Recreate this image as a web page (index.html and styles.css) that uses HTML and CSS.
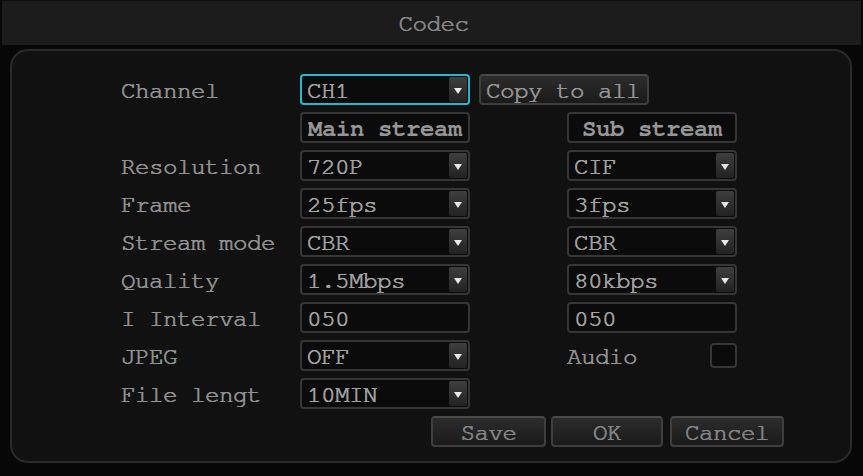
FILE: index.html
```html
<!DOCTYPE html>
<html>
<head>
<meta charset="utf-8">
<link rel="stylesheet" href="styles.css">
</head>
<body>
<div class="header">Codec</div>
<div class="panel">
  <div class="row">
    <div class="label">Channel</div>
    <div class="box select active">CH1<span class="arrow"></span></div>
    <div class="btn copy">Copy to all</div>
  </div>
  <div class="row">
    <div class="label"></div>
    <div class="box center">Main stream</div>
    <div class="box center right">Sub stream</div>
  </div>
  <div class="row">
    <div class="label">Resolution</div>
    <div class="box select">720P<span class="arrow"></span></div>
    <div class="box select right">CIF<span class="arrow"></span></div>
  </div>
  <div class="row">
    <div class="label">Frame</div>
    <div class="box select">25fps<span class="arrow"></span></div>
    <div class="box select right">3fps<span class="arrow"></span></div>
  </div>
  <div class="row">
    <div class="label">Stream mode</div>
    <div class="box select">CBR<span class="arrow"></span></div>
    <div class="box select right">CBR<span class="arrow"></span></div>
  </div>
  <div class="row">
    <div class="label">Quality</div>
    <div class="box select">1.5Mbps<span class="arrow"></span></div>
    <div class="box select right">80kbps<span class="arrow"></span></div>
  </div>
  <div class="row">
    <div class="label">I Interval</div>
    <div class="box">050</div>
    <div class="box right">050</div>
  </div>
  <div class="row">
    <div class="label">JPEG</div>
    <div class="box select">OFF<span class="arrow"></span></div>
    <div class="audio"><span class="label">Audio</span><span class="check"></span></div>
  </div>
  <div class="row">
    <div class="label">File lengt</div>
    <div class="box select">10MIN<span class="arrow"></span></div>
  </div>
  <div class="actions">
    <div class="btn save">Save</div>
    <div class="btn ok">OK</div>
    <div class="btn cancel">Cancel</div>
  </div>
</div>
</body>
</html>
```
FILE: styles.css
```css
html, body {
  margin: 0;
  padding: 0;
}
body {
  width: 863px;
  height: 476px;
  background: #070707;
  font-family: "FreeMono", "Liberation Mono", "Courier New", monospace;
  font-weight: normal;
  font-size: 24px;
  letter-spacing: -0.4px;
  color: #949494;
  text-shadow: 0.6px 0 0 currentColor, -0.3px 0 0 currentColor;
  overflow: hidden;
}
.header {
  height: 45px;
  margin: 0 2px;
  background: #1c1c1c;
  border-top: 1px solid #101010;
  box-sizing: border-box;
  display: flex;
  align-items: center;
  justify-content: center;
  color: #878787;
  padding-left: 4px;
  padding-top: 2px;
}
.panel {
  margin: 4px 0 0 10px;
  width: 842px;
  height: 414px;
  box-sizing: border-box;
  border: 2px solid #2a2a2a;
  border-radius: 18px;
  background: #111111;
  padding: 23px 0 0 109px;
  display: flex;
  flex-direction: column;
  gap: 7px;
}
.row {
  display: flex;
  align-items: center;
  height: 31px;
}
.label {
  width: 179px;
  flex: none;
  color: #929292;
  white-space: pre;
  padding-top: 3px;
}
.box {
  position: relative;
  width: 170px;
  height: 31px;
  box-sizing: border-box;
  border: 2px solid #363636;
  border-radius: 4px;
  background: #0b0b0b;
  color: #a2a2a2;
  padding: 3px 0 0 5px;
  display: flex;
  align-items: center;
  white-space: pre;
}
.box.active {
  border-color: #27b8d0;
}
.box.center {
  justify-content: center;
  padding-left: 0;
  color: #969696;
  font-weight: bold;
  text-shadow: none;
}
.box.right {
  margin-left: 97px;
}
.arrow {
  position: absolute;
  right: 1px;
  top: 1px;
  bottom: 1px;
  width: 18px;
  background: linear-gradient(#3e3e3e, #222222);
  border-radius: 2px;
}
.arrow::after {
  content: "";
  position: absolute;
  left: 5px;
  top: 11px;
  border-left: 4px solid transparent;
  border-right: 4px solid transparent;
  border-top: 6px solid #e8e8e8;
}
.btn {
  height: 31px;
  box-sizing: border-box;
  border: 2px solid #3e3e3e;
  border-top-color: #4a4a4a;
  border-radius: 4px;
  background: linear-gradient(#2c2c2c, #1a1a1a);
  display: flex;
  align-items: center;
  justify-content: center;
  color: #858585;
  white-space: pre;
  padding-top: 3px;
}
.copy {
  width: 170px;
  margin-left: 9px;
  justify-content: flex-start;
  padding-left: 5px;
  color: #969696;
}
.audio {
  margin-left: 97px;
  width: 170px;
  display: flex;
  align-items: center;
  justify-content: space-between;
}
.audio .label {
  width: auto;
}
.check {
  width: 27px;
  height: 25px;
  box-sizing: border-box;
  border: 2px solid #363636;
  border-radius: 4px;
  background: #0b0b0b;
}
.actions {
  display: flex;
  margin-left: 310px;
  height: 32px;
}
.save { width: 115px; }
.ok { width: 112px; margin-left: 5px; }
.cancel { width: 114px; margin-left: 7px; }
```
